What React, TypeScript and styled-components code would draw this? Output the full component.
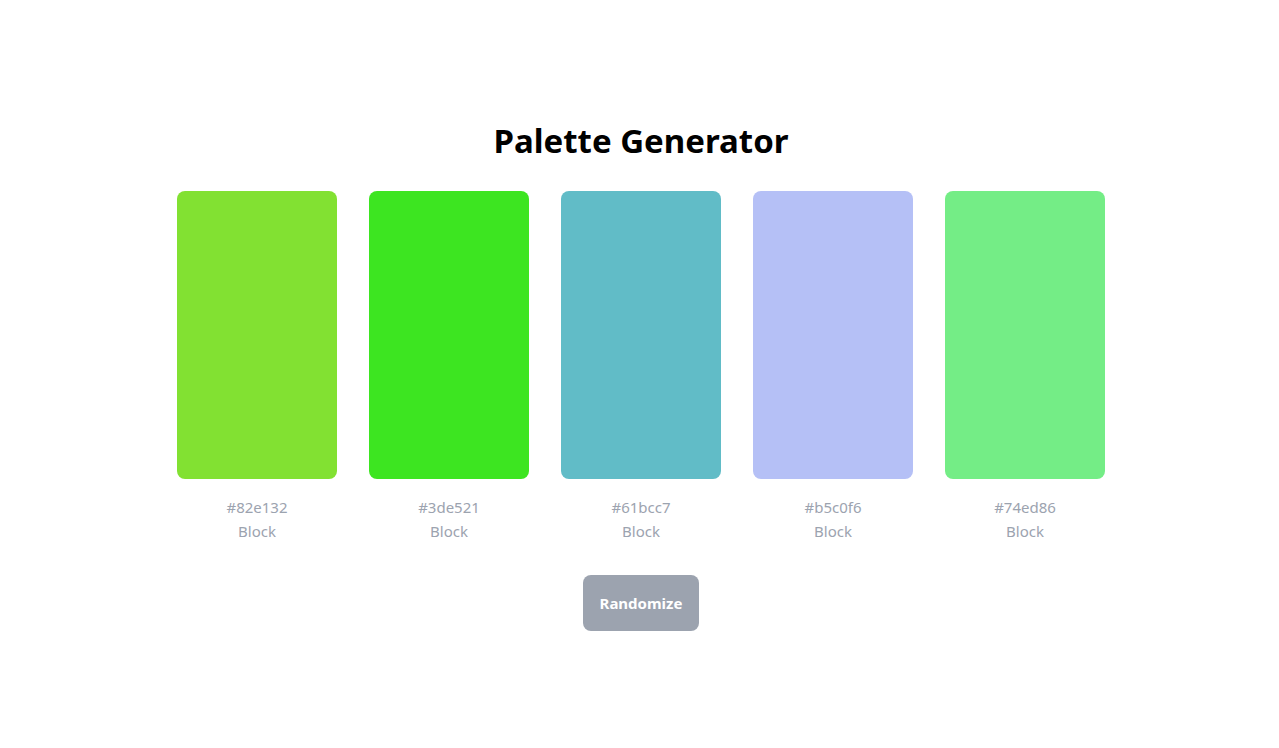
import React from "react";
import styled, { createGlobalStyle } from "styled-components";

const Global = createGlobalStyle`
  html, body { margin: 0; padding: 0; background: #ffffff; }
  body { font-family: "Noto Sans", "Open Sans", sans-serif; }
`;

const Page = styled.main`
  min-height: 100vh;
  display: flex;
  flex-direction: column;
  align-items: center;
  justify-content: center;
  box-sizing: border-box;
  padding-left: 3px;
`;

const Title = styled.h1`
  margin: 0 0 26px;
  font-size: 33px;
  line-height: 48px;
  font-weight: 700;
  color: #000000;
`;

const Swatches = styled.div`
  display: flex;
  gap: 32px;
`;

const Column = styled.div`
  display: flex;
  flex-direction: column;
  align-items: center;
  width: 160px;
`;

const Swatch = styled.div<{ $color: string }>`
  width: 160px;
  height: 288px;
  border-radius: 8px;
  background: ${(p) => p.$color};
  margin-bottom: 16px;
`;

const Label = styled.div`
  font-size: 15px;
  line-height: 24px;
  color: #9ca3af;
`;

const Button = styled.button`
  margin-top: 32px;
  width: 116px;
  height: 56px;
  border: none;
  border-radius: 8px;
  background: #9ca3af;
  color: #ffffff;
  font-family: inherit;
  font-size: 15px;
  font-weight: 700;
  cursor: pointer;
`;

const colors = ["#82e132", "#3de521", "#61bcc7", "#b5c0f6", "#74ed86"];

export default function App() {
  return (
    <>
      <Global />
      <Page>
        <Title>Palette Generator</Title>
        <Swatches>
          {colors.map((c) => (
            <Column key={c}>
              <Swatch $color={c} />
              <Label>{c}</Label>
              <Label>Block</Label>
            </Column>
          ))}
        </Swatches>
        <Button>Randomize</Button>
      </Page>
    </>
  );
}
